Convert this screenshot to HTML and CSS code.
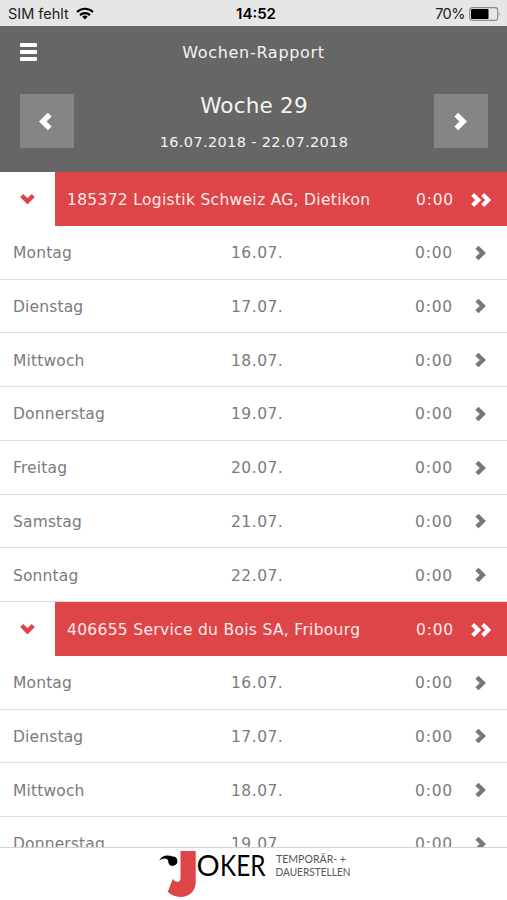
FILE: index.html
```
<!DOCTYPE html>
<html lang="de">
<head>
    <meta charset="UTF-8">
    <meta name="viewport" content="width=device-width, initial-scale=1.0">
    <title>Wochen-Rapport</title>
    <link rel="stylesheet" href="styles.css">
</head>
<body>
    <svg class="defs" width="0" height="0">
        <symbol id="chevron" viewBox="0 0 12 18"><path d="M2 2.5L8.6 9L2 15.5" fill="none" stroke="currentColor" stroke-width="5"/></symbol>
    </svg>

    <div class="status-bar">
        <div class="carrier">
            <span>SIM fehlt</span>
            <svg class="wifi" viewBox="0 0 18 13" fill="none" stroke="#000" stroke-width="2.2">
                <path d="M1 5A11.5 11.5 0 0 1 17 5"/>
                <path d="M4 8.1A7.4 7.4 0 0 1 14 8.1"/>
                <path d="M9 12.5L6.3 9.8A4 4 0 0 1 11.7 9.8Z" fill="#000" stroke="none"/>
            </svg>
        </div>
        <span class="clock">14:52</span>
        <div class="power">
            <span>70%</span>
            <svg class="battery" viewBox="0 0 32 14">
                <rect x="0.7" y="0.7" width="28" height="12.6" rx="2.5" fill="none" stroke="#8c8c8c" stroke-width="1.2"/>
                <rect x="2" y="2" width="17.5" height="10" rx="1" fill="#000"/>
                <path d="M30 5q1.5 2 0 4z" fill="#8c8c8c"/>
            </svg>
        </div>
    </div>

    <header class="header">
        <div class="title-bar">
            <button class="menu"><span></span><span></span><span></span></button>
            <h1>Wochen-Rapport</h1>
        </div>
        <div class="week-nav">
            <button class="nav-button"><svg class="chevron big left"><use href="#chevron"/></svg></button>
            <div class="week">
                <h2>Woche 29</h2>
                <p>16.07.2018 - 22.07.2018</p>
            </div>
            <button class="nav-button"><svg class="chevron big"><use href="#chevron"/></svg></button>
        </div>
    </header>

    <main class="list">
        <section>
            <div class="group">
                <div class="toggle"><svg class="chevron down"><use href="#chevron"/></svg></div>
                <div class="group-bar">
                    <span class="name">185372 Logistik Schweiz AG, Dietikon</span>
                    <span class="hours">0:00</span>
                    <span class="double"><svg class="chevron"><use href="#chevron"/></svg><svg class="chevron"><use href="#chevron"/></svg></span>
                </div>
            </div>
            <div class="row"><span class="day">Montag</span><span class="date">16.07.</span><span class="hours">0:00</span><svg class="chevron"><use href="#chevron"/></svg></div>
            <div class="row"><span class="day">Dienstag</span><span class="date">17.07.</span><span class="hours">0:00</span><svg class="chevron"><use href="#chevron"/></svg></div>
            <div class="row"><span class="day">Mittwoch</span><span class="date">18.07.</span><span class="hours">0:00</span><svg class="chevron"><use href="#chevron"/></svg></div>
            <div class="row"><span class="day">Donnerstag</span><span class="date">19.07.</span><span class="hours">0:00</span><svg class="chevron"><use href="#chevron"/></svg></div>
            <div class="row"><span class="day">Freitag</span><span class="date">20.07.</span><span class="hours">0:00</span><svg class="chevron"><use href="#chevron"/></svg></div>
            <div class="row"><span class="day">Samstag</span><span class="date">21.07.</span><span class="hours">0:00</span><svg class="chevron"><use href="#chevron"/></svg></div>
            <div class="row"><span class="day">Sonntag</span><span class="date">22.07.</span><span class="hours">0:00</span><svg class="chevron"><use href="#chevron"/></svg></div>
        </section>
        <section>
            <div class="group">
                <div class="toggle"><svg class="chevron down"><use href="#chevron"/></svg></div>
                <div class="group-bar">
                    <span class="name">406655 Service du Bois SA, Fribourg</span>
                    <span class="hours">0:00</span>
                    <span class="double"><svg class="chevron"><use href="#chevron"/></svg><svg class="chevron"><use href="#chevron"/></svg></span>
                </div>
            </div>
            <div class="row"><span class="day">Montag</span><span class="date">16.07.</span><span class="hours">0:00</span><svg class="chevron"><use href="#chevron"/></svg></div>
            <div class="row"><span class="day">Dienstag</span><span class="date">17.07.</span><span class="hours">0:00</span><svg class="chevron"><use href="#chevron"/></svg></div>
            <div class="row"><span class="day">Mittwoch</span><span class="date">18.07.</span><span class="hours">0:00</span><svg class="chevron"><use href="#chevron"/></svg></div>
            <div class="row"><span class="day">Donnerstag</span><span class="date">19.07.</span><span class="hours">0:00</span><svg class="chevron"><use href="#chevron"/></svg></div>
        </section>
    </main>

    <footer class="footer">
        <svg class="logo" viewBox="0 0 200 50">
            <path d="M5.3 12.8C7.5 7 14 6.5 18.8 8.6A4.6 4.6 0 1 1 14.3 14.2C15 10.5 9.5 8.8 5.3 12.8Z" fill="#000"/>
            <path d="M26.5 3H41.7V34C41.7 43.5 35 49 26.5 49C21 49 17 47 13.8 43.8L19 30.5C20.5 34.5 26.5 35.5 26.5 30Z" fill="#de4549"/>
            <text class="logo-name" x="42.6" y="27.8">O</text>
            <text class="logo-name" x="66" y="27.8" textLength="45.5" lengthAdjust="spacingAndGlyphs">KER</text>
            <text class="logo-claim" x="122" y="15" textLength="70" lengthAdjust="spacingAndGlyphs">TEMPORÄR- +</text>
            <text class="logo-claim" x="121.5" y="27.6" textLength="75" lengthAdjust="spacingAndGlyphs">DAUERSTELLEN</text>
        </svg>
    </footer>
</body>
</html>
```
FILE: styles.css
```
* {
    box-sizing: border-box;
}
body {
    margin: 0;
    height: 100vh;
    display: flex;
    flex-direction: column;
    overflow: hidden;
    background: #fff;
    color: #7b7b7b;
    font-family: 'DejaVu Sans', Verdana, sans-serif;
    font-size: 15.5px;
}
h1, h2, p {
    margin: 0;
    font-weight: normal;
}
button {
    border: none;
    padding: 0;
    color: #fff;
}
.defs {
    display: none;
}
.status-bar {
    flex: none;
    height: 25.5px;
    padding: 2px 6px 0 8px;
    display: grid;
    grid-template-columns: 1fr auto 1fr;
    align-items: center;
    background: #e6e6e6;
    color: #222;
    font-family: Inter, sans-serif;
    font-size: 14.5px;
}
.carrier, .power {
    display: flex;
    align-items: center;
    gap: 7px;
}
.power {
    justify-content: flex-end;
    gap: 4px;
    letter-spacing: -0.5px;
}
.wifi {
    width: 18px;
    height: 13px;
}
.clock {
    padding-left: 3px;
    color: #000;
    font-weight: 600;
    font-size: 15px;
}
.battery {
    width: 32px;
    height: 14px;
}
.header {
    flex: none;
    height: 146.5px;
    background: #666;
    color: #f4f4f4;
}
.title-bar {
    height: 53px;
    padding: 0 20px;
    display: grid;
    grid-template-columns: 18px 1fr 18px;
    align-items: center;
}
.title-bar h1 {
    font-size: 16px;
    text-align: center;
    letter-spacing: 0.7px;
}
.menu {
    display: flex;
    flex-direction: column;
    gap: 3px;
    background: none;
}
.menu span {
    width: 17px;
    height: 4px;
    border-radius: 1px;
    background: #fff;
}
.week-nav {
    padding: 15px 19px 0 20px;
    display: flex;
    justify-content: space-between;
}
.nav-button {
    width: 54px;
    height: 54px;
    display: flex;
    align-items: center;
    justify-content: center;
    background: #858585;
}
.week {
    text-align: center;
}
.week h2 {
    font-size: 21.5px;
    line-height: 23px;
    letter-spacing: 0.2px;
}
.week p {
    margin-top: 15px;
    font-size: 14.5px;
    line-height: 20px;
    letter-spacing: 0.35px;
}
.chevron {
    width: 11px;
    height: 16px;
    color: #777;
}
.big {
    width: 13px;
    height: 19px;
    margin-top: 2px;
    color: #fff;
}
.left {
    margin-right: 3px;
    transform: rotate(180deg);
}
.list {
    flex: 1;
    min-height: 0;
    overflow: hidden;
}
.group {
    height: 53.75px;
    display: flex;
}
.toggle {
    width: 55px;
    display: flex;
    align-items: center;
    justify-content: center;
}
.down {
    color: #de4549;
    transform: rotate(90deg);
}
.group-bar {
    flex: 1;
    padding: 2px 16px 0 12px;
    display: flex;
    align-items: center;
    background: #de4549;
    color: #ffecea;
}
.name {
    flex: 1;
    white-space: nowrap;
    letter-spacing: 0.31px;
}
.double {
    width: 20px;
    margin-left: 17px;
    display: flex;
}
.double .chevron {
    flex: none;
    width: 10px;
    color: #fff;
}
.row {
    height: 53.75px;
    padding: 2px 20px 0 13px;
    display: grid;
    grid-template-columns: 218px 184px 60px 11px;
    align-items: center;
    border-bottom: 1.5px solid #dedede;
}
.row .chevron {
    margin-bottom: 1px;
}
.day {
    letter-spacing: 0.15px;
}
.date {
    letter-spacing: 0.5px;
}
.hours {
    letter-spacing: 0.8px;
}
.footer {
    flex: none;
    height: 53.5px;
    display: flex;
    justify-content: center;
    border-top: 1px solid #d2d2d2;
}
.logo {
    width: 200px;
    height: 50px;
}
.logo-name {
    font-family: Lato, sans-serif;
    font-size: 29px;
    fill: #000;
}
.logo-claim {
    font-family: Lato, sans-serif;
    font-size: 11.5px;
    fill: #555;
}
```
